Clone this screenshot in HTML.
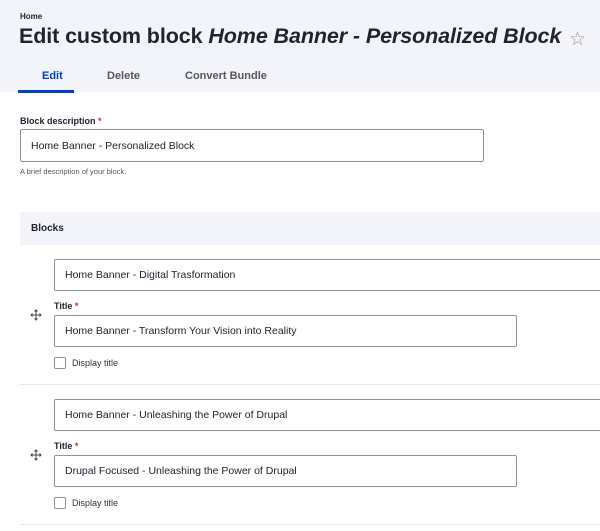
<!DOCTYPE html>
<html><head><style>
*{box-sizing:border-box;margin:0;padding:0}
body{width:600px;height:531px;overflow:hidden;background:#fff;font-family:"Liberation Sans",sans-serif;color:#222330;position:relative}
.a{position:absolute}
.hdr{left:0;top:0;width:600px;height:92px;background:#f3f4f9}
.inp{position:absolute;border:1px solid #8e929c;border-radius:2px;background:#fff;font-size:10.5px;padding-left:10px;display:flex;align-items:center;color:#222330}
.lbl{position:absolute;font-size:9px;font-weight:bold}
.req{color:#d72222}
.cb{position:absolute;width:12px;height:12px;border:1px solid #8e929c;border-radius:2px;background:#fff}
.sm{position:absolute;font-size:9px;color:#333}
.sep{position:absolute;left:20px;width:580px;height:1px;background:#e6e7ee}
</style></head><body>
<div class="a hdr"></div>
<div class="a" style="left:20px;top:12px;font-size:8px;font-weight:bold">Home</div>
<div class="a" style="left:19px;top:24px;font-size:21.5px;font-weight:bold;letter-spacing:-0.1px;white-space:nowrap">Edit custom block <i>Home Banner - Personalized Block</i></div>
<div class="a" style="left:569px;top:28px;font-size:19px;color:#999">☆</div>
<div class="a" style="left:42px;top:70px;font-size:11px;font-weight:bold;color:#003ecc">Edit</div>
<div class="a" style="left:107px;top:70px;font-size:11px;font-weight:bold;color:#55565b">Delete</div>
<div class="a" style="left:185px;top:70px;font-size:11px;font-weight:bold;color:#55565b">Convert Bundle</div>
<div class="a" style="left:18px;top:90px;width:56px;height:3px;background:#003ecc"></div>
<div class="lbl" style="left:20px;top:116px">Block description <span class="req">*</span></div>
<div class="inp" style="left:20px;top:129px;width:464px;height:33px">Home Banner - Personalized Block</div>
<div class="a" style="left:20px;top:167px;font-size:7.5px;color:#555">A brief description of your block.</div>
<div class="a" style="left:20px;top:212px;width:580px;height:33px;background:#f3f4f9"></div>
<div class="a" style="left:31px;top:223px;font-size:10px;font-weight:bold">Blocks</div>

<div class="inp" style="left:54px;top:259px;width:560px;height:32px">Home Banner - Digital Trasformation</div>
<div class="lbl" style="left:54px;top:301px">Title <span class="req">*</span></div>
<svg class="a" style="left:30px;top:309px" width="12" height="12" viewBox="0 0 12 12" fill="none" stroke="#444" stroke-width="1"><path d="M6 1v10M1 6h10M4.5 2.5L6 1l1.5 1.5M4.5 9.5L6 11l1.5-1.5M2.5 4.5L1 6l1.5 1.5M9.5 4.5L11 6l-1.5 1.5"/></svg>
<div class="inp" style="left:54px;top:315px;width:463px;height:32px">Home Banner - Transform Your Vision into Reality</div>
<div class="cb" style="left:54px;top:357px"></div>
<div class="sm" style="left:72px;top:358px">Display title</div>
<div class="sep" style="top:384px"></div>

<div class="inp" style="left:54px;top:399px;width:560px;height:32px">Home Banner - Unleashing the Power of Drupal</div>
<div class="lbl" style="left:54px;top:441px">Title <span class="req">*</span></div>
<svg class="a" style="left:30px;top:449px" width="12" height="12" viewBox="0 0 12 12" fill="none" stroke="#444" stroke-width="1"><path d="M6 1v10M1 6h10M4.5 2.5L6 1l1.5 1.5M4.5 9.5L6 11l1.5-1.5M2.5 4.5L1 6l1.5 1.5M9.5 4.5L11 6l-1.5 1.5"/></svg>
<div class="inp" style="left:54px;top:455px;width:463px;height:32px">Drupal Focused - Unleashing the Power of Drupal</div>
<div class="cb" style="left:54px;top:497px"></div>
<div class="sm" style="left:72px;top:498px">Display title</div>
<div class="sep" style="top:524px"></div>
</body></html>
